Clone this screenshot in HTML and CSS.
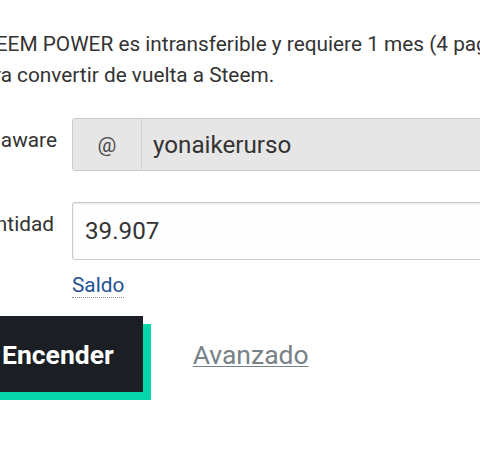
FILE: index.html
```html
<!DOCTYPE html>
<html lang="es">
<head>
<meta charset="utf-8">
<title>Power Up</title>
<link rel="stylesheet" href="styles.css">
</head>
<body>
<div class="page">
  <p class="intro">STEEM POWER es intransferible y requiere 1 mes (4 pagos)<br>para convertir de vuelta a Steem.</p>
  <form class="form">
    <div class="row">
      <label class="label">De aware</label>
      <div class="group">
        <span class="addon">@</span>
        <input class="field field-disabled" type="text" value="yonaikerurso" disabled>
      </div>
    </div>
    <div class="row">
      <label class="label">Cantidad</label>
      <div class="stack">
        <input class="field field-amount" type="text" value="39.907">
        <div class="balance"><a class="saldo">Saldo</a></div>
      </div>
    </div>
    <div class="actions">
      <button class="btn" type="button">Encender</button>
      <a class="advanced">Avanzado</a>
    </div>
  </form>
</div>
</body>
</html>
```

FILE: styles.css
```css
html {
  overflow: hidden;
  background: #ffffff;
}

body {
  margin: 0;
  padding: 0;
  min-height: 461px;
  font-family: Roboto, "Liberation Sans", sans-serif;
  color: #333333;
}

.page {
  margin-left: -29px;
  padding-top: 29px;
  width: 760px;
}

.intro {
  margin: 0;
  font-size: 20.8px;
  line-height: 31px;
  color: #333333;
}

.form {
  margin-top: 27px;
  display: flex;
  flex-direction: column;
}

.row {
  display: grid;
  grid-template-columns: 101px 1fr;
}

.row + .row {
  margin-top: 31px;
}

.label {
  font-size: 20.8px;
  line-height: 31px;
  padding-top: 7px;
  color: #333333;
  white-space: nowrap;
}

.group {
  display: flex;
  height: 53px;
  border: 1px solid #cacaca;
  border-radius: 3px;
  box-sizing: border-box;
  background: #e6e6e6;
  overflow: hidden;
}

.addon {
  width: 68px;
  flex: none;
  display: flex;
  align-items: center;
  justify-content: center;
  font-size: 21px;
  color: #4a4a4a;
  border-right: 1px solid #d2d2d2;
  background: #e6e6e6;
}

.field {
  font-family: Roboto, "Liberation Sans", sans-serif;
  font-size: 24.2px;
  color: #333333;
  margin: 0;
  outline: none;
  box-sizing: border-box;
}

.field-disabled {
  flex: 1;
  border: 0;
  background: #e6e6e6;
  padding: 0 0 0 11px;
  height: 100%;
  -webkit-text-fill-color: #333333;
  opacity: 1;
}

.stack {
  display: flex;
  flex-direction: column;
}

.field-amount {
  height: 58px;
  width: 100%;
  border: 1px solid #cacaca;
  border-radius: 3px;
  background: #fefefe;
  box-shadow: inset 0 1px 2px rgba(10, 10, 10, 0.1);
  padding: 0 0 0 12px;
}

.balance {
  margin-top: 10px;
  font-size: 20.8px;
  line-height: 31px;
}

.saldo {
  color: #1f5294;
  border-bottom: 1px dotted #8a8a8a;
  cursor: pointer;
}

.actions {
  margin-top: 15px;
  display: flex;
  align-items: center;
}

.btn {
  font-family: Roboto, "Liberation Sans", sans-serif;
  font-weight: 700;
  font-size: 26.5px;
  color: #ffffff;
  background: #1b1f23;
  border: 0;
  border-radius: 0;
  height: 76px;
  padding: 0 29px 0 31px;
  box-shadow: 8px 8px 0 0 #06d6a9;
  cursor: pointer;
}

.advanced {
  margin-left: 50px;
  font-size: 26.5px;
  color: #788187;
  text-decoration: underline;
  text-underline-offset: 2px;
  text-decoration-thickness: 1px;
  cursor: pointer;
}
```
